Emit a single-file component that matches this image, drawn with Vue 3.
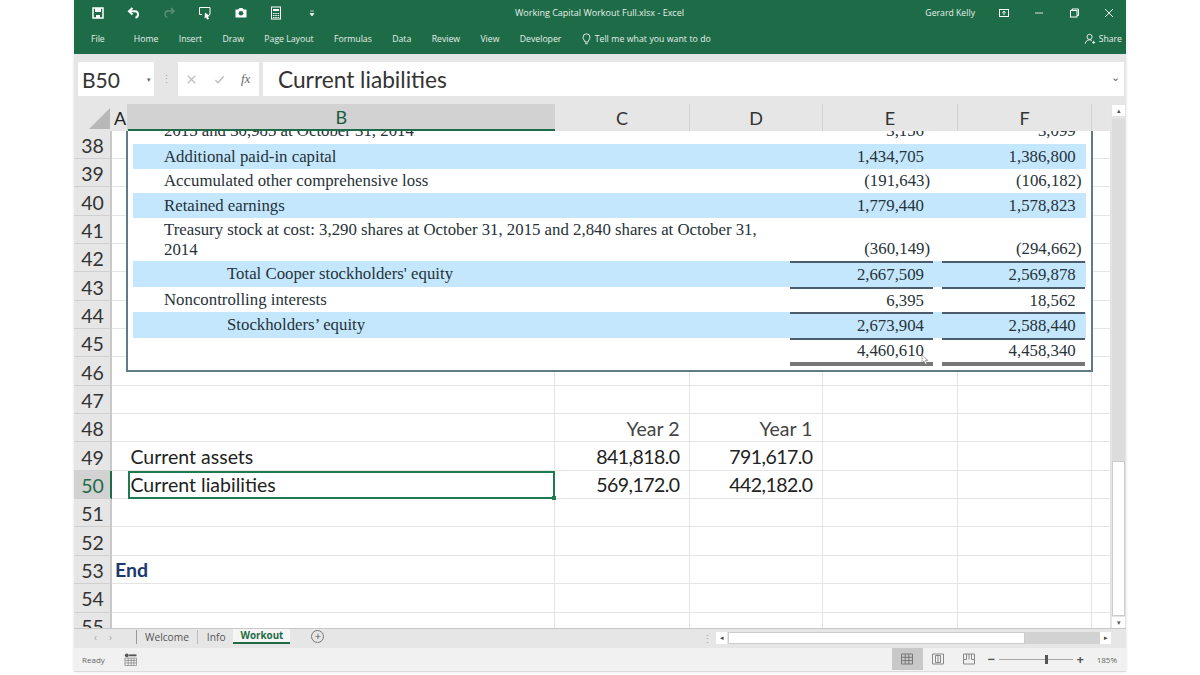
<script setup>
const ribbon = ['Home', 'Insert', 'Draw', 'Page Layout', 'Formulas', 'Data', 'Review', 'View', 'Developer']
const cols = [
  { id: 'B', selected: true },
  { id: 'C' }, { id: 'D' }, { id: 'E' }, { id: 'F' }
]
const rowNums = [38,39,40,41,42,43,44,45,46,47,48,49,50,51,52,53,54]
const cells = {
  48: { c: 'Year 2', d: 'Year 1' },
  49: { b: 'Current assets', c: '841,818.0', d: '791,617.0', tight: true },
  50: { b: 'Current liabilities', c: '569,172.0', d: '442,182.0', active: true, tight: true },
  53: { a: 'End' }
}
const sheet = [
  { label: 'Additional paid-in capital', e: '1,434,705', f: '1,386,800', blue: true, h: 24.6 },
  { label: 'Accumulated other comprehensive loss', e: '(191,643)', f: '(106,182)', neg: true, h: 24.2 },
  { label: 'Retained earnings', e: '1,779,440', f: '1,578,823', blue: true, h: 25 },
  { label: 'Treasury stock at cost: 3,290 shares at October 31, 2015 and 2,840 shares at October 31, 2014', e: '(360,149)', f: '(294,662)', neg: true, h: 43.5, wrap: true },
  { label: "Total Cooper stockholders' equity", e: '2,667,509', f: '2,569,878', blue: true, indent: true, h: 25.8, rule: true },
  { label: 'Noncontrolling interests', e: '6,395', f: '18,562', h: 25, rule: true },
  { label: 'Stockholders’ equity', e: '2,673,904', f: '2,588,440', blue: true, indent: true, h: 26, rule: true },
  { label: '', e: '4,460,610', f: '4,458,340', h: 28, rule: true, double: true }
]
</script>

<template>
  <div class="page">
    <div class="window">
      <header class="ribbon">
        <div class="title-row">
          <div class="qat">
            <svg class="ico" viewBox="0 0 14 14"><path d="M2 2h10v10H2z" fill="none" stroke="#fff" stroke-width="1.5"/><path d="M4 2h6v4H4zM5 9h4v3H5z" fill="#fff"/></svg>
            <svg class="ico" viewBox="0 0 14 14"><path d="M5.500 2 2 5.200l3.500 3.200" fill="none" stroke="#fff" stroke-width="2"/><path d="M2.500 5.200H8a3.200 3.200 0 0 1 3 3.200c0 1.700-1 2.800-2.500 3.300" fill="none" stroke="#fff" stroke-width="2"/></svg>
            <svg class="ico" viewBox="0 0 14 14"><path d="M9 2l3 3-3 3" fill="none" stroke="#5f9079" stroke-width="1.300"/><path d="M11.500 5H6a3.200 3.200 0 0 0-3 3.200c0 1.700 1 2.800 2.500 3.300" fill="none" stroke="#5f9079" stroke-width="1.300"/></svg>
            <svg class="ico" viewBox="0 0 14 14"><path d="M4 8.500H1.500v-7H12v7h-1" fill="none" stroke="#fff" stroke-width="1"/><path d="M7 6.500l5 3.500-2 .6 1 2.400-2 .5-1-2.300-1.500 1.300z" fill="#fff"/></svg>
            <svg class="ico" viewBox="0 0 14 14"><path d="M1.500 3.500h3l1-1.500h3l1 1.500h3v8h-11z" fill="#fff"/><circle cx="7" cy="7.300" r="2.300" fill="#1e6c47"/></svg>
            <svg class="ico" viewBox="0 0 14 14"><rect x="2.500" y="1" width="9" height="12" fill="none" stroke="#fff"/><path d="M4 3h6v2H4z" fill="#fff"/><path d="M4 7h1.500v1H4zM6.300 7h1.500v1H6.300zM8.600 7h1.500v1H8.600zM4 9h1.500v1H4zM6.300 9h1.500v1H6.300zM8.600 9h1.500v1H8.600zM4 11h1.500v.9H4zM6.300 11h1.500v.9H6.300zM8.600 11h1.500v.9H8.600z" fill="#fff"/></svg>
            <svg class="ico" viewBox="0 0 14 14"><path d="M5 5h4M5 7.500h4L7 10z" fill="#fff" stroke="#fff" stroke-width=".6"/></svg>
          </div>
          <div class="doc-title">Working Capital Workout Full.xlsx  -  Excel</div>
          <div class="account">
            <span class="user">Gerard Kelly</span>
            <div class="win-btns">
              <svg class="ico" viewBox="0 0 14 14"><rect x="2.500" y="3.500" width="9" height="7" fill="none" stroke="#fff"/><path d="M7 9V5M5.300 6.700 7 5l1.700 1.700" fill="none" stroke="#fff"/></svg>
              <svg class="ico" viewBox="0 0 14 14"><path d="M3 7h8" stroke="#d5e4dc"/></svg>
              <svg class="ico" viewBox="0 0 14 14"><rect x="3.500" y="4.500" width="6.500" height="6.500" fill="none" stroke="#fff"/><path d="M5 4.500V3h6.500v6.500H10" fill="none" stroke="#fff"/></svg>
              <svg class="ico" viewBox="0 0 14 14"><path d="M3 3l8 8M11 3l-8 8" stroke="#e6efea"/></svg>
            </div>
          </div>
        </div>
        <div class="tab-row">
          <nav class="tabs">
            <span class="file">File</span>
            <span v-for="t in ribbon" :key="t" class="rtab">{{ t }}</span>
            <span class="tell">
              <svg class="bulb" viewBox="0 0 10 14"><path d="M3.200 10.500C3 8.500 1 7.800 1 5a4 4 0 0 1 8 0c0 2.800-2 3.500-2.200 5.500zM3.500 12.500h3" fill="none" stroke="#fff"/></svg>
              Tell me what you want to do
            </span>
          </nav>
          <span class="share">
            <svg class="ico" viewBox="0 0 14 14"><circle cx="6.500" cy="4.500" r="3" fill="none" stroke="#fff"/><path d="M1.500 12.500c.3-2.800 2.200-4.500 5-4.500 1.200 0 2 .3 2.800.8M9.500 11h3.500M11.200 9.200v3.500" fill="none" stroke="#fff"/></svg>
            Share
          </span>
        </div>
      </header>

      <section class="formula-bar">
        <div class="name-box"><span class="name">B50</span><span class="caret">▾</span></div>
        <span class="grip">⋮</span>
        <div class="fx-box">
          <svg class="ico fx-ico" viewBox="0 0 14 14"><path d="M3 3l8 8M11 3l-8 8" stroke="#bdbdbd" stroke-width="1.300"/></svg>
          <svg class="ico fx-ico" viewBox="0 0 14 14"><path d="M2.500 7.500l3 3 6-7" fill="none" stroke="#bdbdbd" stroke-width="1.500"/></svg>
          <span class="fx">fx</span>
        </div>
        <div class="formula"><span>Current liabilities</span><span class="chev">⌄</span></div>
      </section>

      <section class="sheet-area">
        <div class="grid-wrap">
          <div class="col-head">
            <div class="corner"><i></i></div>
            <div class="ch a">A</div>
            <div v-for="c in cols" :key="c.id" class="ch" :class="{ sel: c.selected }">{{ c.id }}</div>
            <div class="ch g"></div>
          </div>
          <div class="grid">
            <div v-for="n in rowNums" :key="n" class="row" :class="{ first: n === 38 }">
              <div class="rh" :class="{ on: n === 50 }">{{ n }}</div>
              <div class="cell a end">{{ cells[n] && cells[n].a }}</div>
              <div class="cell b" :class="{ active: cells[n] && cells[n].active }">{{ cells[n] && cells[n].b }}</div>
              <div class="cell num" :class="{ tight: cells[n] && cells[n].tight }">{{ cells[n] && cells[n].c }}</div>
              <div class="cell num" :class="{ tight: cells[n] && cells[n].tight }">{{ cells[n] && cells[n].d }}</div>
              <div class="cell"></div>
              <div class="cell"></div>
              <div class="cell"></div>
            </div>
            <div class="row last">
              <div class="rh">55</div>
              <div class="cell a"></div><div class="cell b"></div><div class="cell"></div><div class="cell"></div><div class="cell"></div><div class="cell"></div><div class="cell"></div>
            </div>

            <div class="picture">
              <div class="clip-row">
                <span class="lab">2015 and 30,985 at October 31, 2014</span>
                <span class="val">3,156</span><span class="val">3,099</span>
              </div>
              <div v-for="r in sheet" :key="r.label" class="pic-row" :class="{ blue: r.blue, neg: r.neg, rule: r.rule, dbl: r.double }" :style="{ height: r.h + 'px' }">
                <span class="lab" :class="{ indent: r.indent, wrap: r.wrap }">{{ r.label }}</span>
                <span class="val">{{ r.e }}</span>
                <span class="val">{{ r.f }}</span>
              </div>
              <svg class="cursor" viewBox="0 0 8 12"><path d="M1 1v8l2-2 1.500 3.500 1.500-.6L4.500 6.500H7z" fill="#fff" stroke="#555" stroke-width=".8" stroke-dasharray="1 .6"/></svg>
            </div>
          </div>
        </div>
        <aside class="vscroll">
          <span class="vbtn">▴</span>
          <span class="vthumb"></span>
          <span class="vrest"></span>
          <span class="vbtn">▾</span>
        </aside>
      </section>

      <section class="sheet-tabs">
        <div class="nav"><span>‹</span><span>›</span></div>
        <div class="stabs">
          <span class="stab">Welcome</span>
          <span class="stab">Info</span>
          <span class="stab on">Workout</span>
          <span class="add">+</span>
        </div>
        <div class="hscroll">
          <span class="hgrip">⋮</span>
          <span class="hbtn">◂</span>
          <span class="hthumb"></span>
          <span class="htrack"></span>
          <span class="hbtn">▸</span>
        </div>
      </section>

      <footer class="status">
        <span class="ready">Ready</span>
        <svg class="macro" viewBox="0 0 14 14"><circle cx="3" cy="2.500" r="2" fill="#555"/><path d="M5.500 2.500h8" stroke="#555" stroke-width="2"/><path d="M1 5.500h12.500v8H1zM1 8h12.500M1 10.700h12.500M4.500 5.500v8M7.700 5.500v8M10.700 5.500v8" fill="none" stroke="#777" stroke-width=".7"/></svg>
        <div class="views">
          <span class="view on"><svg viewBox="0 0 14 14"><path d="M1.500 2h11v10h-11zM1.500 5.300h11M1.500 8.600h11M5.200 2v10M8.800 2v10" fill="none" stroke="#777"/></svg></span>
          <span class="view"><svg viewBox="0 0 14 14"><path d="M1.500 2h11v10h-11zM4.500 3.500h5v7h-5zM7 3.500v7" fill="none" stroke="#888"/></svg></span>
          <span class="view"><svg viewBox="0 0 14 14"><path d="M1.500 2h11v10h-11zM7 2v5.500M1.500 7.500h3M9.500 7.500h3M4.500 2v5.500M9.500 2v5.500" fill="none" stroke="#888"/></svg></span>
        </div>
        <div class="zoom">
          <span class="zbtn">−</span>
          <span class="slider"><i></i></span>
          <span class="zbtn">+</span>
        </div>
        <span class="pct">185%</span>
      </footer>
    </div>
  </div>
</template>

<style>
html, body { margin: 0; background: #fff; }
</style>

<style scoped>
.page { width: 1200px; height: 675px; overflow: hidden; background: #fff; display: flex; justify-content: center; }
.window { width: 1052px; height: 672px; display: flex; flex-direction: column; font-family: "Open Sans", sans-serif; background: #e6e6e6; box-shadow: 0 0 3px rgba(0,0,0,.12); }

.ribbon { height: 54px; flex: none; background: #1e6c47; color: #e6efea; font-size: 8.700px; }
.title-row { height: 25px; display: flex; align-items: center; position: relative; padding: 0 10px 0 17px; }
.qat { display: flex; gap: 21.700px; align-items: center; }
.ico { width: 14px; height: 14px; display: block; flex: none; }
.doc-title { position: absolute; left: 441px; top: 6px; white-space: pre; font-size: 9px; }
.account { margin-left: auto; display: flex; align-items: center; }
.user { margin-right: 22px; }
.win-btns { display: flex; gap: 21px; }
.tab-row { height: 27px; display: flex; align-items: center; padding: 0 4px 0 17px; }
.tabs { display: flex; align-items: center; }
.file { margin-right: 29px; }
.rtab { margin-right: 20.400px; }
.tell { display: flex; align-items: center; gap: 4px; margin-left: 0; word-spacing: .3px; }
.bulb { width: 9px; height: 12px; }
.share { margin-left: auto; display: flex; align-items: center; gap: 3px; }
.share .ico { width: 12px; height: 12px; }

.formula-bar { height: 50px; flex: none; box-sizing: border-box; padding: 8px 2px 8px 4px; display: flex; align-items: stretch; background: #e6e6e6; }
.name-box { width: 76px; background: #fff; display: flex; align-items: center; justify-content: space-between; padding: 0 2px 0 4px; box-sizing: border-box; }
.name { font: 21px Lato, sans-serif; color: #333; }
.caret { font-size: 7px; color: #666; margin-right: 1px; }
.grip { width: 24px; text-align: center; color: #aaa; font-size: 11px; line-height: 34px; }
.fx-box { width: 81px; background: #fff; display: flex; align-items: center; gap: 15px; padding-left: 7px; box-sizing: border-box; margin-right: 4px; }
.fx-ico { width: 13px; height: 13px; }
.fx { font: italic 13px "Liberation Serif", serif; color: #666; }
.formula { flex: 1; background: #fff; display: flex; align-items: center; justify-content: space-between; padding: 0 4px 0 15px; font: 22.700px Lato, sans-serif; color: #333; }
.chev { font-size: 11px; color: #666; line-height: 1; margin-top: -6px; }

.sheet-area { flex: none; height: 524px; display: flex; background: #fff; }
.grid-wrap { width: 1037px; flex: none; overflow: hidden; }
.col-head { height: 27px; display: grid; grid-template-columns: 38px 15.500px 427.500px 135px 133px 135px 134px 19px; background: #e6e6e6; font: 18px Lato, sans-serif; color: #333; }
.corner { position: relative; }
.corner i { position: absolute; right: 2px; bottom: 2px; border-style: solid; border-width: 0 0 21px 21px; border-color: transparent transparent #b8b8b8 transparent; }
.ch { display: flex; align-items: center; justify-content: center; box-sizing: border-box; border-right: 1px solid #d2d2d2; }
.ch.a { color: #222; justify-content: flex-start; padding-left: 2px; }
.ch.sel { background: #d2d2d2; border-bottom: 2px solid #1e6c47; color: #1d5a3e; border-right: 0; }
.ch.g { border-right: 0; }

.grid { position: relative; height: 497px; overflow: hidden; }
.row { height: 28.350px; display: grid; grid-template-columns: 38px 15.500px 427.500px 135px 133px 135px 134px 19px; font: 19.500px Lato, sans-serif; color: #222; }
.row.first { height: 28px; }
.row.last { height: 17px; overflow: hidden; }
.rh { background: #e6e6e6; border-right: 2px solid #c8c8c8; border-bottom: 1px solid #d0d0d0; box-sizing: border-box; display: flex; align-items: center; justify-content: center; color: #333; padding: 2px 0 0 1px; }
.rh.on { background: #d2d2d2; color: #1e6c47; border-right-color: #1e6c47; }
.cell { box-sizing: border-box; border-right: 1px solid #e4e4e4; border-bottom: 1px solid #e4e4e4; display: flex; align-items: center; padding: 1px 3px 0; min-width: 0; white-space: nowrap; }
.cell.num { justify-content: flex-end; padding-right: 9.500px; color: #444; }
.cell.num.tight { letter-spacing: -.55px; color: #222; }
.cell.end { font-weight: 700; color: #1c3a6b; overflow: visible; }
.cell.a { border-right: 0; }
.cell.active { position: relative; border: 2px solid #1e7a50; padding: 0 1px; }
.cell.active::after { content: ""; position: absolute; right: -3px; bottom: -3px; width: 4px; height: 4px; background: #1e7a50; }

.picture { position: absolute; left: 52px; top: 0; width: 967px; height: 241px; box-sizing: border-box; border: 2px solid #5f7b85; border-top: 0; background: #fff; padding: 0 5px; font: 16.800px "Liberation Serif", serif; color: #263238; overflow: hidden; }
.clip-row { height: 13px; display: grid; grid-template-columns: 657px 143px 151.700px; align-items: end; line-height: 13px; position: relative; }
.clip-row .lab, .clip-row .val { transform: translateY(-7px); display: block; }
.clip-row .val:last-child, .pic-row .val:last-child { margin-left: 8.700px; }
.pic-row { display: grid; grid-template-columns: 657px 143px 151.700px; align-items: center; position: relative; box-sizing: border-box; line-height: 20px; padding-top: 1px; }
.pic-row.blue { background: #c4e7fd; }
.lab { padding-left: 31px; }
.lab.indent { padding-left: 94px; }
.lab.wrap { width: 625px; box-sizing: border-box; margin-top: -1px; }
.rule .lab { margin-top: -2px; }
.val { text-align: right; padding-right: 9px; position: relative; }
.neg .val { padding-right: 3px; align-self: end; margin-bottom: 2px; }
.rule .val { align-self: stretch; line-height: 24px; border-top: 2px solid #4b5d6c; margin-top: -1px; }
.dbl .val { border-bottom: 4px solid #777; margin-bottom: 2px; line-height: 22px; }
.cursor { position: absolute; left: 793px; top: 223px; width: 8px; height: 12px; }

.vscroll { width: 15px; flex: none; background: #e4e4e4; display: flex; flex-direction: column; align-items: center; padding: 1px 1px 0; box-sizing: border-box; font-size: 7px; color: #555; }
.vbtn { width: 100%; height: 11px; background: #fff; text-align: center; line-height: 11px; flex: none; }
.vthumb { width: 100%; height: 342px; background: #dcdcdc; margin-top: 3px; flex: none; }
.vrest { flex: 1; background: #fff; width: 100%; margin-bottom: 1px; box-sizing: border-box; border: 1px solid #ccc; }

.sheet-tabs { height: 20px; flex: none; display: flex; align-items: stretch; background: #e6e6e6; border-top: 1px solid #c8c8c8; box-sizing: border-box; }
.nav { width: 63px; flex: none; display: flex; justify-content: center; gap: 12px; color: #aaa; font-size: 10px; line-height: 14px; box-sizing: border-box; border-right: 1px solid #999; margin: 1px 0 4px; padding-right: 4px; }
.stabs { display: flex; align-items: center; font-size: 10.200px; color: #555; padding-bottom: 4px; }
.stab { padding: 0 8.500px; line-height: 14px; border-right: 1px solid #bbb; }
.stab:first-child { padding-left: 8px; }
.stab:nth-child(2) { border-right: 0; padding-right: 7px; }
.stab.on { align-self: stretch; background: #f5f5f5; color: #1e6c47; font-weight: 700; font-size: 9.800px; border: 0; border-bottom: 2px solid #1e6c47; line-height: 14px; padding: 0 7px 0 8px; box-sizing: border-box; }
.add { width: 11px; height: 11px; margin-left: 21px; border: 1px solid #777; border-radius: 50%; text-align: center; line-height: 10px; font-size: 11px; color: #555; }
.hscroll { margin-left: auto; width: 409px; margin-right: 15px; display: flex; align-items: center; padding-bottom: 1px; }
.hgrip { width: 14px; color: #aaa; font-size: 11px; }
.hbtn { width: 11px; height: 12px; background: #fff; font-size: 7px; line-height: 12px; text-align: center; color: #444; flex: none; }
.hthumb { width: 297px; height: 12px; background: #fff; border: 1px solid #ccc; box-sizing: border-box; margin-left: 1px; flex: none; }
.htrack { flex: 1; height: 12px; background: #d2d2d2; }

.status { height: 24px; flex: none; display: flex; align-items: center; background: #f1f1f1; border-bottom: 1px solid #dcdcdc; box-sizing: border-box; padding: 0 9px 1px 8px; font-size: 8px; color: #666; }
.ready { width: 42px; }
.macro { width: 13px; height: 13px; }
.views { margin-left: auto; display: flex; align-items: stretch; height: 100%; }
.view { width: 31px; display: flex; align-items: center; justify-content: center; }
.view.on { background: #c8c8c8; }
.view svg { width: 14px; height: 14px; }
.zoom { display: flex; align-items: center; width: 98px; margin-left: 2px; }
.zbtn { font-size: 13px; font-weight: 700; color: #555; line-height: 1; width: 9px; text-align: center; }
.slider { flex: 1; height: 1px; background: #aaa; position: relative; margin: 0 3px; }
.slider i { position: absolute; left: 46px; top: -4px; width: 3px; height: 9px; background: #555; }
.pct { margin-left: 12px; }
</style>
